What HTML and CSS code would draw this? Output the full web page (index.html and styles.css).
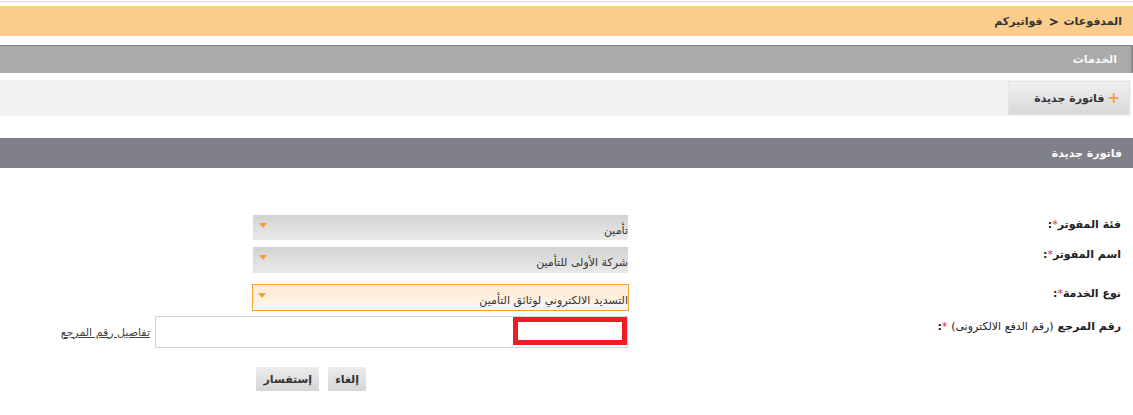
FILE: index.html
```html
<!DOCTYPE html>
<html lang="ar" dir="rtl">
<head>
<meta charset="utf-8">
<title>فواتيركم</title>
<link rel="stylesheet" href="styles.css">
</head>
<body>
<div class="topline"></div>
<div class="crumbs"><span>المدفوعات</span><svg class="sep" width="9" height="8" viewBox="0 0 9 8" aria-hidden="true"><path d="M1 1 L8 4 L1 7" fill="none" stroke="#333" stroke-width="1.8" stroke-linejoin="miter"/></svg><span>فواتيركم</span></div>
<div class="services">الخدمات</div>
<div class="tabband">
  <div class="tab"><span class="plus">+</span><span>فاتورة جديدة</span></div>
</div>
<div class="sectionbar">فاتورة جديدة</div>
<div class="form">
  <div class="row r1">
    <div class="label">فئة المفوتر<span class="req">*</span>:</div>
    <div class="field"><div class="select"><span class="val">تأمين</span><i class="arrow"></i></div></div>
  </div>
  <div class="row r2">
    <div class="label">اسم المفوتر<span class="req">*</span>:</div>
    <div class="field"><div class="select"><span class="val">شركة الأولى للتأمين</span><i class="arrow"></i></div></div>
  </div>
  <div class="row r3">
    <div class="label">نوع الخدمة<span class="req">*</span>:</div>
    <div class="field"><div class="select active"><span class="val">التسديد الالكتروني لوثائق التأمين</span><i class="arrow"></i></div></div>
  </div>
  <div class="row r4">
    <div class="label">رقم المرجع <span class="normal">(رقم الدفع الالكترونى)</span> <span class="req">*</span>:</div>
    <div class="field inputfield">
      <div class="textbox"><span class="mark"></span></div>
      <a class="link" href="#">تفاصيل رقم المرجع</a>
    </div>
  </div>
  <div class="row r5">
    <div class="label"></div>
    <div class="field buttons">
      <button class="btn" type="button">إلغاء</button>
      <button class="btn" type="button">إستفسار</button>
    </div>
  </div>
</div>
</body>
</html>
```
FILE: styles.css
```css
html, body {
  margin: 0;
  padding: 0;
  background: #ffffff;
}
body {
  font-family: "DejaVu Sans", "Noto Sans", sans-serif;
  font-size: 11px;
  color: #333333;
  direction: rtl;
}
.topline {
  height: 1px;
  margin-top: 1px;
  background: #fbd29b;
}
.crumbs {
  margin-top: 4px;
  height: 30px;
  background: #fbcd8d;
  display: flex;
  align-items: center;
  gap: 6px;
  padding-right: 11px;
  font-weight: bold;
  color: #333333;
}
.crumbs .sep {
  display: block;
  margin-top: 1px;
}
.services {
  margin-top: 9px;
  height: 27px;
  border-top: 1px solid #7f7f7f;
  border-right: 2px solid #8a8a8a;
  background: #aaaaaa;
  color: #f8f8f8;
  font-weight: bold;
  display: flex;
  align-items: center;
  padding-right: 14px;
}
.tabband {
  margin-top: 7px;
  margin-right: 2px;
  height: 36px;
  background: #f2f2f2;
  display: flex;
  align-items: center;
}
.tab {
  width: 122px;
  margin-right: 1px;
  box-sizing: border-box;
  height: 34px;
  border: 1px solid #e4e4e4;
  background: linear-gradient(#f0f0f0, #d8d8d8);
  display: flex;
  align-items: center;
  gap: 3px;
  padding-right: 9px;
  font-weight: bold;
  color: #333333;
}
.tab .plus {
  color: #f5a233;
  font-size: 15px;
  font-weight: bold;
}
.sectionbar {
  margin-top: 22px;
  height: 30px;
  background: #7f8089;
  color: #ffffff;
  font-weight: bold;
  display: flex;
  align-items: center;
  padding-right: 11px;
}
.form {
  padding-right: 12px;
  padding-top: 47px;
}
.row {
  display: grid;
  grid-template-columns: 493px auto;
  align-items: start;
}
.r2 { margin-top: 7px; }
.r3 { margin-top: 11px; }
.r4 { margin-top: 5px; }
.r5 { margin-top: 19px; }
.label {
  font-weight: bold;
  color: #222222;
  padding-top: 2px;
  line-height: 15px;
  white-space: nowrap;
}
.r2 .label { padding-top: 0; }
.r4 .label { padding-top: 3px; }
.label .req {
  color: #c8323c;
  font-weight: normal;
}
.label .normal {
  font-weight: normal;
}
.field {
  display: flex;
  align-items: center;
}
.select {
  width: 375px;
  height: 25px;
  box-sizing: border-box;
  background: linear-gradient(#d3d3d3, #e9e9e9);
  display: flex;
  justify-content: space-between;
  align-items: flex-start;
  padding: 9px 0 0 6px;
  color: #333333;
}
.r2 .select { height: 26px; }
.select.active {
  width: 377px;
  height: 27px;
  border: 1px solid #f4a236;
  background: linear-gradient(#fdebd4, #fff6ec);
  padding: 9px 0 0 5px;
  margin-right: -1px;
}
.select .val {
  line-height: 13px;
  white-space: nowrap;
}
.select .arrow {
  display: block;
  width: 0;
  height: 0;
  margin-top: -1px;
  border-left: 4px solid transparent;
  border-right: 4px solid transparent;
  border-top: 5px solid #f5a033;
}
.inputfield {
  gap: 5px;
}
.textbox {
  width: 473px;
  height: 32px;
  box-sizing: border-box;
  border: 1px solid #d4d4d4;
  background: #ffffff;
  position: relative;
}
.textbox .mark {
  position: absolute;
  right: 0;
  top: 0;
  width: 114px;
  height: 28px;
  box-sizing: border-box;
  border: 5px solid #ee1c25;
}
.link {
  color: #444444;
  text-decoration: underline;
  white-space: nowrap;
}
.buttons {
  gap: 9px;
  padding-right: 262px;
}
.btn {
  font-family: "DejaVu Sans", "Noto Sans", sans-serif;
  font-size: 11px;
  font-weight: bold;
  color: #333333;
  height: 24px;
  border: none;
  background: linear-gradient(#ececec, #d6d6d6);
  padding: 0 7px;
  margin: 0;
}
```
